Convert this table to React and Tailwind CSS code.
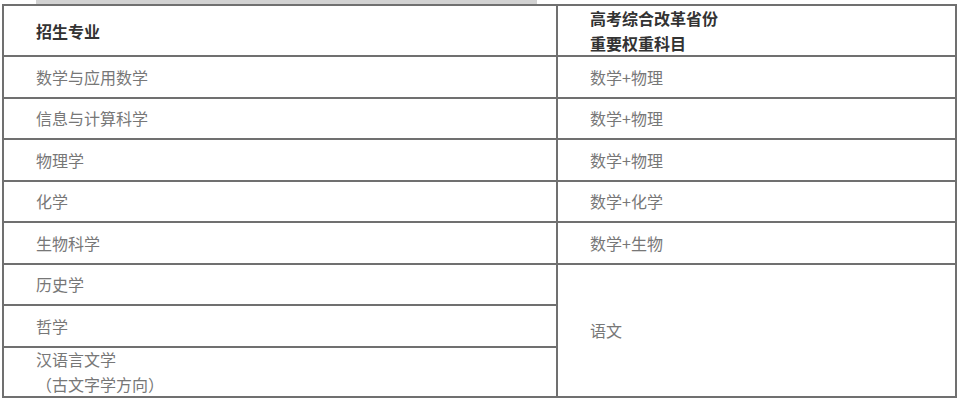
import { Fragment } from "react";

const rows = [
  ["数学与应用数学", "数学+物理"],
  ["信息与计算科学", "数学+物理"],
  ["物理学", "数学+物理"],
  ["化学", "数学+化学"],
  ["生物科学", "数学+生物"],
];

const font = { fontFamily: '"Noto Sans CJK SC", "Noto Sans", sans-serif' };

export default function App() {
  return (
    <div className="w-[960px] h-[403px] bg-white overflow-hidden" style={font}>
      <div className="ml-[36px] w-[501px] h-[4px] bg-[#d2d2d2]" />
      <div className="ml-[2px] w-[955px] border-2 border-[#707070] bg-[#707070] grid grid-cols-[552px_397px] gap-[2px] grid-rows-[49px_repeat(7,39.5px)_48.5px]">
        <div className="bg-white flex items-center pl-8 text-[16px] font-bold text-[#333]">招生专业</div>
        <div className="bg-white flex flex-col justify-center pl-8 text-[16px] leading-[25px] font-bold text-[#333]">
          <div>高考综合改革省份</div>
          <div>重要权重科目</div>
        </div>
        {rows.map(([a, b]) => (
          <Fragment key={a}>
            <div className="bg-white flex items-center pl-8 text-[16px] text-[#777]">{a}</div>
            <div className="bg-white flex items-center pl-8 text-[16px] text-[#777]">{b}</div>
          </Fragment>
        ))}
        <div className="bg-white flex items-center pl-8 text-[16px] text-[#777]">历史学</div>
        <div className="bg-white row-span-3 flex items-center pl-8 text-[16px] text-[#777]">语文</div>
        <div className="bg-white flex items-center pl-8 text-[16px] text-[#777]">哲学</div>
        <div className="bg-white flex flex-col justify-center pl-8 text-[16px] leading-[25px] text-[#777]">
          <div>汉语言文学</div>
          <div>（古文字学方向）</div>
        </div>
      </div>
    </div>
  );
}
